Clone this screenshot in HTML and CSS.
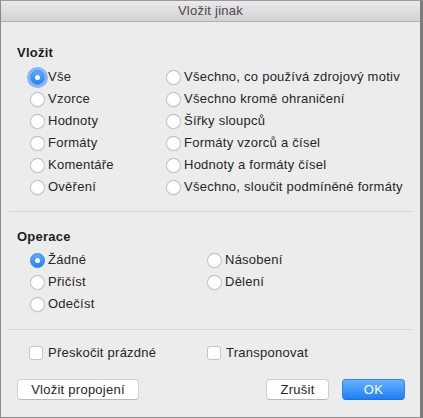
FILE: index.html
```html
<!DOCTYPE html>
<html lang="cs">
<head>
<meta charset="utf-8">
<title>Vložit jinak</title>
<link rel="stylesheet" href="styles.css">
</head>
<body>
<div class="window">
  <div class="titlebar">Vložit jinak</div>
  <div class="content">
    <div class="heading h-paste">Vložit</div>
    <div class="grid paste-grid">
      <label class="opt"><input type="radio" name="p" class="radio focus" checked><span>Vše</span></label>
      <label class="opt"><input type="radio" name="p" class="radio"><span>Všechno, co používá zdrojový motiv</span></label>
      <label class="opt"><input type="radio" name="p" class="radio"><span>Vzorce</span></label>
      <label class="opt"><input type="radio" name="p" class="radio"><span>Všechno kromě ohraničení</span></label>
      <label class="opt"><input type="radio" name="p" class="radio"><span>Hodnoty</span></label>
      <label class="opt"><input type="radio" name="p" class="radio"><span>Šířky sloupců</span></label>
      <label class="opt"><input type="radio" name="p" class="radio"><span>Formáty</span></label>
      <label class="opt"><input type="radio" name="p" class="radio"><span>Formáty vzorců a čísel</span></label>
      <label class="opt"><input type="radio" name="p" class="radio"><span>Komentáře</span></label>
      <label class="opt"><input type="radio" name="p" class="radio"><span>Hodnoty a formáty čísel</span></label>
      <label class="opt"><input type="radio" name="p" class="radio"><span>Ověření</span></label>
      <label class="opt"><input type="radio" name="p" class="radio"><span>Všechno, sloučit podmíněné formáty</span></label>
    </div>
    <div class="sep sep1"></div>
    <div class="heading h-op">Operace</div>
    <div class="grid op-grid">
      <label class="opt"><input type="radio" name="o" class="radio" checked><span>Žádné</span></label>
      <label class="opt"><input type="radio" name="o" class="radio"><span>Násobení</span></label>
      <label class="opt"><input type="radio" name="o" class="radio"><span>Přičíst</span></label>
      <label class="opt"><input type="radio" name="o" class="radio"><span>Dělení</span></label>
      <label class="opt"><input type="radio" name="o" class="radio"><span>Odečíst</span></label>
    </div>
    <div class="sep sep2"></div>
    <div class="grid check-grid">
      <label class="opt"><input type="checkbox" class="check"><span>Přeskočit prázdné</span></label>
      <label class="opt"><input type="checkbox" class="check"><span>Transponovat</span></label>
    </div>
    <div class="buttons">
      <button class="btn btn-link">Vložit propojení</button>
      <div class="spacer"></div>
      <button class="btn btn-cancel">Zrušit</button>
      <button class="btn btn-ok">OK</button>
    </div>
  </div>
</div>
</body>
</html>
```

FILE: styles.css
```css
html, body {
  margin: 0;
  padding: 0;
  background: #ececec;
}

body {
  font-family: "Liberation Sans", Arial, sans-serif;
  font-size: 13px;
  letter-spacing: 0.25px;
  color: #262626;
}

.window {
  width: 423px;
  height: 418px;
  box-sizing: border-box;
  border: 1px solid #8a8a8a;
  border-right: 3px solid #7c7c7c;
  border-top: 1px solid #9a9a9a;
  background: #ececec;
  display: flex;
  flex-direction: column;
}

.titlebar {
  height: 20px;
  line-height: 20px;
  text-align: center;
  font-size: 13px;
  color: #4a4a4a;
  background: linear-gradient(#ebe9eb, #d3d1d3);
  border-bottom: 1px solid #b2b0b2;
  flex-shrink: 0;
}

.content {
  padding: 0 15px 0 16px;
  display: flex;
  flex-direction: column;
}

.heading {
  font-weight: bold;
  line-height: 16px;
  color: #1e1e1e;
}

.h-paste { margin-top: 23px; }
.h-op { margin-top: 17px; }

.grid {
  display: grid;
  grid-auto-rows: 22px;
  padding-left: 13px;
}

.paste-grid {
  margin-top: 5px;
  grid-template-columns: 136px 1fr;
}

.op-grid {
  margin-top: 4px;
  grid-template-columns: 177px 1fr;
}

.check-grid {
  margin-top: 12px;
  padding-left: 12px;
  grid-template-columns: 178px 1fr;
}

.opt {
  display: flex;
  align-items: center;
  gap: 3px;
  white-space: nowrap;
  line-height: 16px;
}

.radio {
  appearance: none;
  -webkit-appearance: none;
  margin: 0;
  width: 15px;
  height: 15px;
  border-radius: 50%;
  box-sizing: border-box;
  border: 1px solid #c4c4c4;
  border-top-color: #bababa;
  background: #ffffff;
  box-shadow: 0 0.5px 1px rgba(0, 0, 0, 0.08);
  position: relative;
  flex-shrink: 0;
}

.radio:checked {
  border: 1px solid #2f86f5;
  background: linear-gradient(#5daafa, #2383f6);
}

.radio:checked::after {
  content: "";
  position: absolute;
  width: 5px;
  height: 5px;
  border-radius: 50%;
  background: #ffffff;
  left: 4px;
  top: 4px;
}

.radio.focus:checked {
  box-shadow: 0 0 0 3px rgba(95, 160, 245, 0.7);
}

.check {
  appearance: none;
  -webkit-appearance: none;
  margin: 0 1px 0 0;
  width: 14px;
  height: 14px;
  box-sizing: border-box;
  border: 1px solid #c4c4c4;
  border-radius: 3px;
  background: #ffffff;
  flex-shrink: 0;
}

.check + span { margin-left: 1px; }

.sep {
  height: 1px;
  background: #d6d6d6;
  margin-left: -8px;
  margin-right: -7px;
}

.sep1 { margin-top: 13px; }
.sep2 { margin-top: 14px; }

.buttons {
  display: flex;
  align-items: center;
  margin-top: 15px;
  gap: 13px;
}

.spacer { flex: 1; }

.btn {
  font-family: "Liberation Sans", Arial, sans-serif;
  font-size: 13px;
  letter-spacing: 0.25px;
  height: 21px;
  padding: 0;
  border-radius: 4px;
  box-sizing: border-box;
  border: 1px solid #cfcfcf;
  border-bottom-color: #b9b9b9;
  background: #ffffff;
  color: #262626;
  line-height: 19px;
}

.btn-link { width: 122px; }
.btn-cancel { width: 63px; }
.btn-ok {
  width: 63px;
  color: #ffffff;
  border: 1px solid #2a84f4;
  border-bottom-color: #1f6fe0;
  background: linear-gradient(#69b0fb, #1c7ff7);
}
```
